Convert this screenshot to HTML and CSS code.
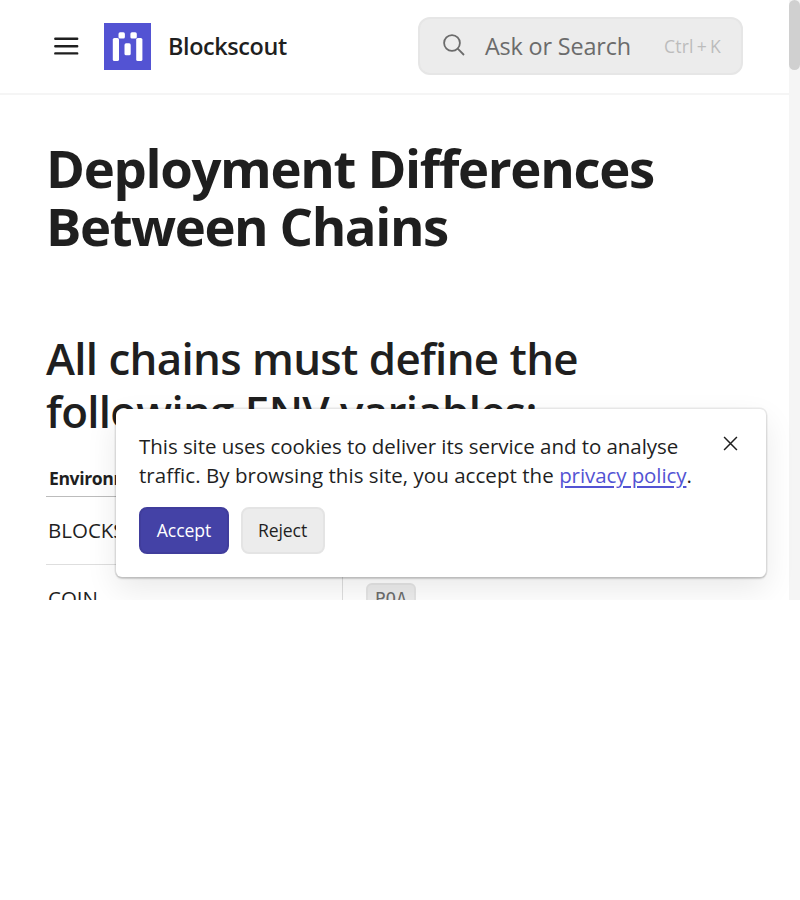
FILE: index.html
```html
<!DOCTYPE html>
<html lang="en">
<head>
<meta charset="utf-8">
<title>Deployment Differences Between Chains</title>
<link rel="stylesheet" href="styles.css">
</head>
<body>
<div class="viewport">
  <div class="page">
    <header class="header">
      <svg class="menu" viewBox="0 0 26 20"><path d="M2.300 2.800H24.200M2.300 10.200H24.200M2.300 17.400H24.200"/></svg>
      <svg class="logo" viewBox="0 0 47 47"><rect width="47" height="47" fill="#5353d3"/><g fill="#fff"><rect x="8.800" y="15" width="6.200" height="23" rx="1.600"/><rect x="32.200" y="15" width="6.200" height="23" rx="1.600"/><rect x="14.500" y="9.300" width="6.400" height="6.300" rx="1.600"/><rect x="26.400" y="9.300" width="6.400" height="6.300" rx="1.600"/><rect x="20.500" y="20.300" width="6.200" height="12" rx="1.600"/></g></svg>
      <span class="brand">Blockscout</span>
      <div class="search">
        <svg class="glass" viewBox="0 0 24 24"><circle cx="10" cy="10" r="7.900"/><path d="M15.700 15.700L22 22"/></svg>
        <span class="search-label">Ask or Search</span>
        <span class="keys">Ctrl<span class="plus">+</span>K</span>
      </div>
    </header>
    <main class="content">
      <h1>Deployment Differences<br><span class="h1-second">Between Chains</span></h1>
      <h2>All chains must define the<br>following ENV variables:</h2>
      <div class="table">
        <div class="row head"><div class="cell">Environment</div></div>
        <div class="row"><div class="cell">BLOCKSCOUT</div><div class="cell value"></div></div>
        <div class="row"><div class="cell">COIN</div><div class="cell value"><code>POA</code></div></div>
      </div>
    </main>
  </div>
  <div class="scrollbar"><div class="thumb"></div></div>
  <div class="cookie">
    <p><span class="first">This site uses cookies to deliver its service and to analyse</span><br><span class="second">traffic. By browsing this site, you accept the </span><a>privacy policy</a>.</p>
    <svg class="close" viewBox="0 0 14 14"><path d="M1 1L13 13M13 1L1 13"/></svg>
    <div class="actions"><button class="btn primary">Accept</button><button class="btn">Reject</button></div>
  </div>
</div>
</body>
</html>
```
FILE: styles.css
```css
* { box-sizing: border-box; }
body { margin: 0; background: #fff; color: #1f1f1f; font-family: "Open Sans", sans-serif; }
.viewport { position: relative; display: flex; height: 600px; overflow: hidden; }
.page { flex: 1; min-width: 0; }
.header { display: flex; align-items: center; height: 95px; padding: 0 46px 1px 53px; border-bottom: 2px solid #f5f5f5; }
.menu { width: 26px; height: 20px; fill: none; stroke: #1f1f1f; stroke-width: 2.4; stroke-linecap: round; }
.logo { width: 47px; height: 47px; margin-left: 25px; margin-top: 1px; }
.brand { margin-left: 17px; font-size: 23.4px; font-weight: 600; letter-spacing: -0.38px; white-space: nowrap; }
.search { display: flex; align-items: center; width: 325px; height: 58px; margin-left: auto; margin-bottom: 1px; padding: 0 20px 0 22px; border: 2px solid #e6e6e6; border-radius: 12px; background: #ececec; }
.glass { width: 24px; height: 24px; margin: -1px 0 0; fill: none; stroke: #6b6b6b; stroke-width: 1.8; }
.search-label { margin-left: 19px; font-size: 23.4px; letter-spacing: -0.17px; color: #6b6b6b; white-space: nowrap; }
.keys { margin-left: auto; font-size: 17.6px; letter-spacing: 0.2px; color: #bcbcbc; white-space: nowrap; }
.plus { margin: 0 3px; }
.content { padding: 44px 46px 0; }
h1 { margin: 0; font-size: 52.7px; line-height: 58px; font-weight: 700; letter-spacing: -1.34px; white-space: nowrap; }
.h1-second { letter-spacing: -1.44px; }
h2 { margin: 77px 0 0; font-size: 43.9px; line-height: 53px; font-weight: 600; letter-spacing: -0.72px; word-spacing: 0.5px; white-space: nowrap; }
.table { margin-top: 23px; }
.row { display: flex; height: 68px; padding-bottom: 2px; border-bottom: 1px solid #dedede; }
.row.head { height: 36px; padding-bottom: 1px; border-bottom-color: #bcbcbc; }
.cell { display: flex; align-items: center; width: 296px; padding-left: 2px; font-size: 20.5px; }
.head .cell { padding-left: 3px; font-size: 17.6px; font-weight: 700; letter-spacing: -0.4px; }
.value { margin-bottom: -2px; padding-left: 23px; border-left: 1px solid #dedede; }
code { height: 32px; width: 50px; padding: 0 7px; border: 2px solid #e4e4e4; border-radius: 6px; background: #ececec; color: #6b6b6b; font: 17.6px/28px "DejaVu Sans Mono", monospace; }
.scrollbar { width: 11px; background: #f5f5f5; }
.thumb { height: 70px; border-radius: 5.5px; background: #d0d0d0; }
.cookie { position: absolute; left: 116px; top: 409px; width: 650px; height: 168px; padding: 23px; border-radius: 6px; background: #fff; box-shadow: 0 0 0 1.5px rgba(0,0,0,.08), 0 2px 2px rgba(0,0,0,.14), 0 12px 32px rgba(0,0,0,.09); }
.cookie p { margin: 0; font-size: 20.5px; line-height: 29px; white-space: nowrap; }
.first { letter-spacing: -0.05px; }
.second { letter-spacing: 0.045px; }
.cookie a { color: #5353d3; letter-spacing: -0.08px; text-decoration: underline; text-decoration-thickness: 2px; text-underline-offset: 3px; }
.close { position: absolute; right: 28px; top: 27px; width: 15px; height: 15px; fill: none; stroke: #1f1f1f; stroke-width: 1.4; }
.actions { display: flex; gap: 12px; margin-top: 17px; }
.btn { width: 84px; height: 47px; padding: 0 1px 2px 0; border: 2px solid #e4e4e4; border-radius: 8px; background: #ececec; color: #1f1f1f; font: 17.6px "Open Sans", sans-serif; letter-spacing: -0.1px; }
.primary { width: 90px; padding-right: 0; background: #4442a6; border-color: #403d9c; color: #fff; }
```
